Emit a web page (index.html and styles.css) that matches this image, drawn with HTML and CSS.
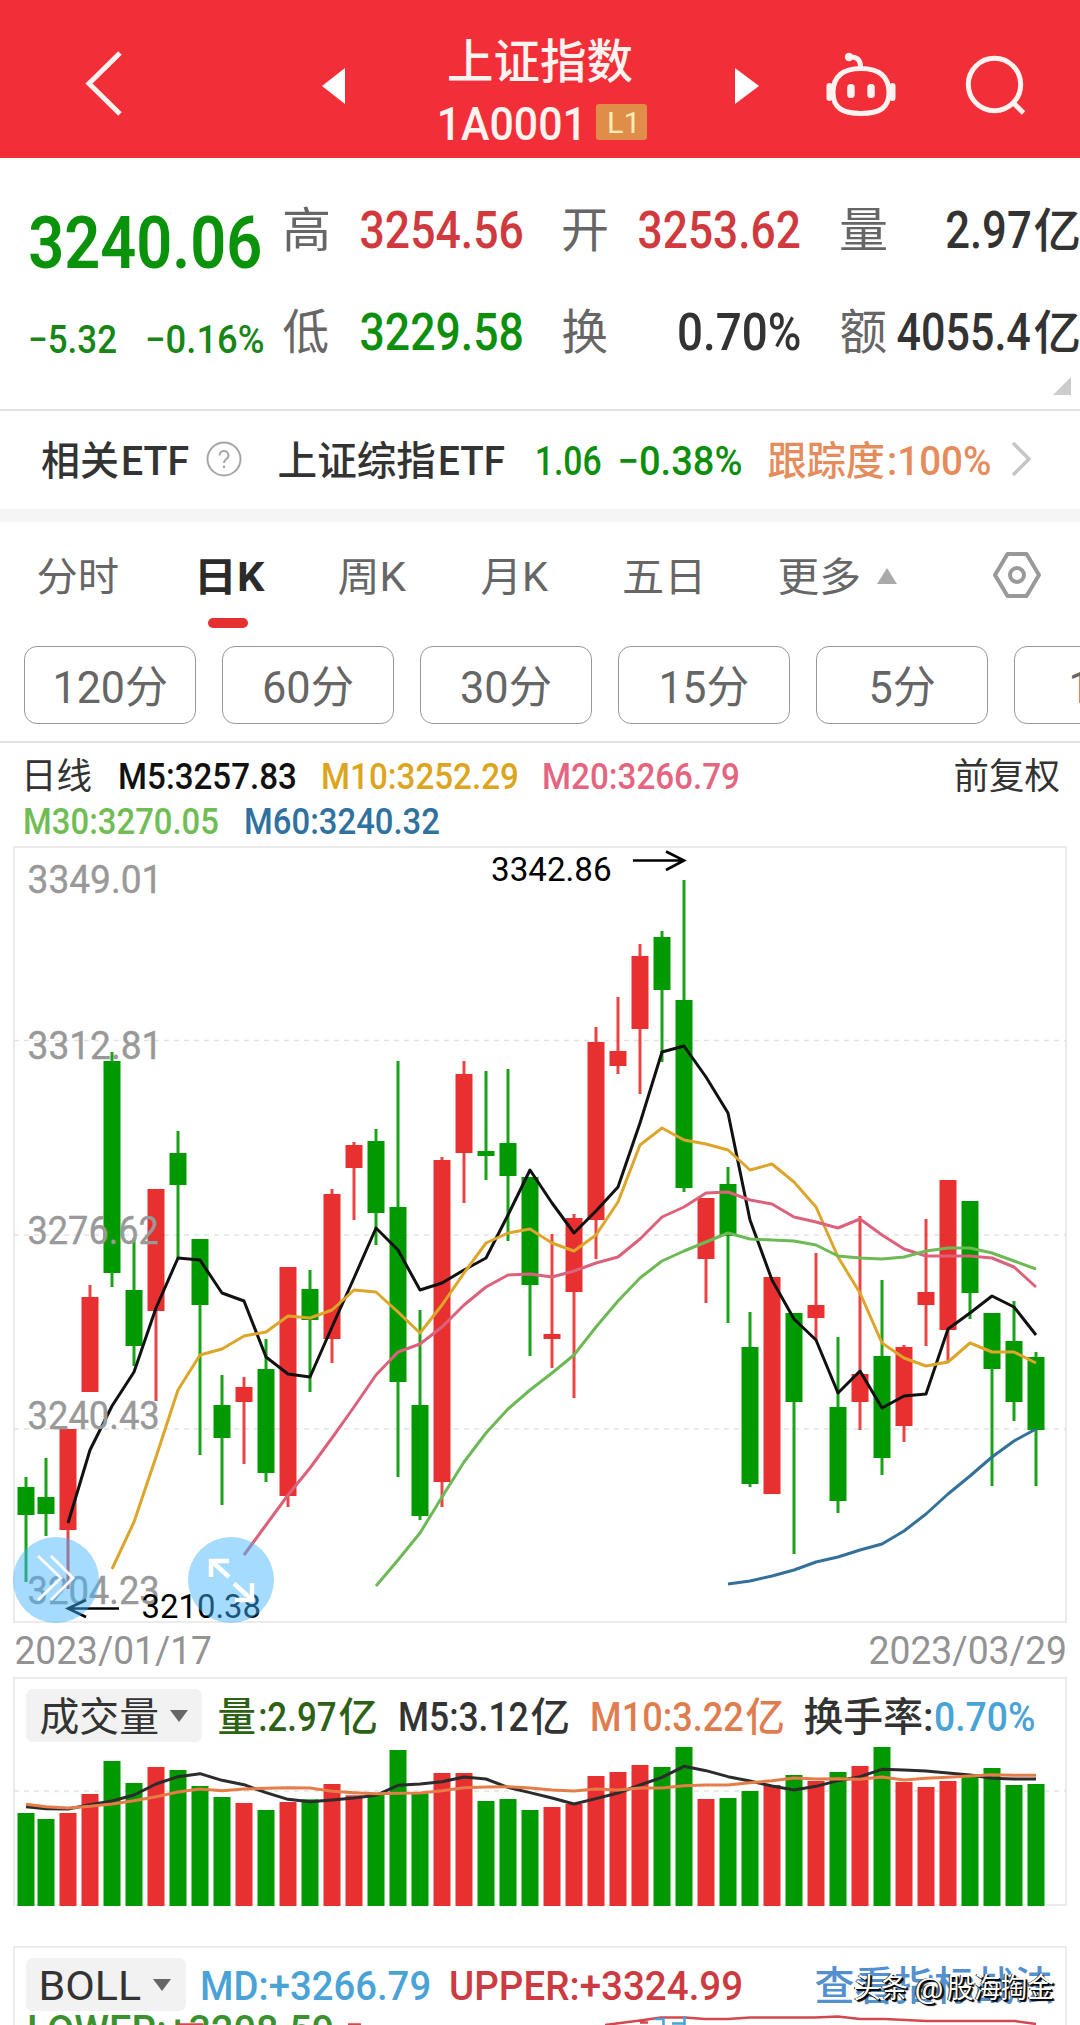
FILE: index.html
```html
<!DOCTYPE html>
<html lang="zh-CN">
<head>
<meta charset="utf-8">
<title>上证指数 1A0001</title>
<link rel="stylesheet" href="styles.css">
</head>
<body>
<div class="app">
  <header class="topbar">
    <svg class="ic back" viewBox="80 50 50 72"><path d="M120 53 89 83.500 120 114"/></svg>
    <svg class="ic prev" viewBox="318 50 30 72"><path d="M345 68v36L322 86z"/></svg>
    <div class="heading">
      <div class="title"><span class="fit" data-w="184">上证指数</span></div>
      <div class="code"><span class="fit" data-w="141">1A0001</span><b class="level"><span class="fit" data-w="27">L1</span></b></div>
    </div>
    <svg class="ic next" viewBox="732 50 30 72"><path d="M735 68v36l24-18z"/></svg>
    <svg class="ic robot" viewBox="822 50 78 72">
      <path class="line" d="M861 68.500c-18 0-28 8-28 24 0 15 9 21 28 21s28-6 28-21c0-16-10-24-28-24zM849 57c7-.5 11.500 2 11.500 10"/>
      <circle cx="849" cy="57" r="4.200"/>
      <rect x="826.500" y="83" width="6" height="18" rx="3"/><rect x="889.500" y="83" width="6" height="18" rx="3"/>
      <rect x="847.200" y="84" width="7.500" height="14" rx="3.500"/><rect x="867.300" y="84" width="7.500" height="14" rx="3.500"/>
    </svg>
    <svg class="ic search" viewBox="960 50 70 72"><circle cx="994.500" cy="84.500" r="26.200"/><path d="M1013 102.500 1023.500 113"/></svg>
  </header>

  <section class="quote">
    <div class="last">
      <div class="price"><span class="fit" data-w="231">3240.06</span></div>
      <div class="change"><span class="fit" data-w="87">−5.32</span><span class="fit" data-w="117">−0.16%</span></div>
    </div>
    <div class="stats">
      <span class="label"><span class="fit" data-w="45">高</span></span><span class="val up"><span class="fit" data-w="162">3254.56</span></span>
      <span class="label"><span class="fit" data-w="45">开</span></span><span class="val up"><span class="fit" data-w="162">3253.62</span></span>
      <span class="label"><span class="fit" data-w="46">量</span></span><span class="val edge"><span class="fit" data-w="84">2.97</span><span class="fit unit" data-w="45">亿</span></span>
      <span class="label"><span class="fit" data-w="45">低</span></span><span class="val down"><span class="fit" data-w="162">3229.58</span></span>
      <span class="label"><span class="fit" data-w="45">换</span></span><span class="val"><span class="fit" data-w="122">0.70%</span></span>
      <span class="label"><span class="fit" data-w="46">额</span></span><span class="val edge"><span class="fit" data-w="133">4055.4</span><span class="fit unit" data-w="45">亿</span></span>
    </div>
    <i class="corner"></i>
  </section>

  <section class="etf">
    <span class="fit" data-w="77">相关</span><span class="fit" data-w="67">ETF</span>
    <svg class="help" viewBox="0 0 36 36"><circle cx="18" cy="18" r="16.500"/><path d="M13.500 14.500c0-6 9-6 9 0 0 3.500-4.500 3.500-4.500 7.500M18 24.500v2.500"/></svg>
    <span class="fit" data-w="157">上证综指</span><span class="fit" data-w="66">ETF</span>
    <span class="fit down" data-w="65">1.06</span><span class="fit down" data-w="122">−0.38%</span>
    <span class="fit track" data-w="116">跟踪度</span><span class="fit track" data-w="102">:100%</span>
    <svg class="more" viewBox="0 0 22 38"><path d="M3 3 19 19 3 35"/></svg>
  </section>

  <nav class="tabs">
    <span class="tab"><span class="fit" data-w="81">分时</span></span>
    <span class="tab active"><span class="fit" data-w="68">日K</span></span>
    <span class="tab"><span class="fit" data-w="69">周K</span></span>
    <span class="tab"><span class="fit" data-w="68">月K</span></span>
    <span class="tab"><span class="fit" data-w="77">五日</span></span>
    <span class="tab"><span class="fit" data-w="81">更多</span></span>
    <svg class="caret" viewBox="0 0 22 18"><path d="M11 1 21 17H1z"/></svg>
    <svg class="gear" viewBox="0 0 48 46"><path d="M14.500 2h19L46 23 33.500 44h-19L2 23z"/><circle cx="24" cy="23" r="7"/></svg>
  </nav>
  <div class="chips">
    <span class="chip"><span class="fit" data-w="113">120分</span></span>
    <span class="chip"><span class="fit" data-w="90">60分</span></span>
    <span class="chip"><span class="fit" data-w="90">30分</span></span>
    <span class="chip"><span class="fit" data-w="88">15分</span></span>
    <span class="chip"><span class="fit" data-w="65">5分</span></span>
    <span class="chip"><span class="fit" data-w="60">1分</span></span>
  </div>

  <div class="legend">
    <div class="row first">
      <span class="fit cn" data-w="67">日线</span><span class="fit m5" data-w="176">M5:3257.83</span><span class="fit m10" data-w="195">M10:3252.29</span><span class="fit m20" data-w="195">M20:3266.79</span><span class="fit cn" data-w="105">前复权</span>
    </div>
    <div class="row second"><span class="fit m30" data-w="194">M30:3270.05</span><span class="fit m60" data-w="194">M60:3240.32</span></div>
  </div>

  <section class="kline">
    <svg id="kline" viewBox="13 846 1054 777"></svg>
    <div class="float expand"><svg viewBox="13 1537 86 86"><path d="M38 1556 61 1578 38 1600M51 1556 73 1578 51 1600"/></svg></div>
    <div class="float zoom"><svg viewBox="188 1537 86 86"><path d="M229 1577 212 1561.500M211 1577V1561h18M234 1583.500 251 1599M252 1583v17h-17"/></svg></div>
  </section>
  <div class="dates"><span class="fit" data-w="196">2023/01/17</span><span class="fit" data-w="196">2023/03/29</span></div>

  <section class="panel volume">
    <div class="head">
      <span class="picker"><span class="fit" data-w="118">成交量</span><i></i></span>
      <span class="fit vol" data-w="37">量</span><span class="fit vol" data-w="77">:2.97</span><span class="fit vol" data-w="37">亿</span>
      <span class="fit" data-w="129">M5:3.12</span><span class="fit" data-w="37">亿</span>
      <span class="fit ma" data-w="152">M10:3.22</span><span class="fit ma" data-w="37">亿</span>
      <span class="fit" data-w="128">换手率:</span><span class="fit rate" data-w="99">0.70%</span>
    </div>
    <svg id="volume" viewBox="13 1742 1054 164"></svg>
  </section>

  <section class="panel boll">
    <div class="head">
      <span class="picker"><span class="fit" data-w="101">BOLL</span><i></i></span>
      <span class="fit rate" data-w="228">MD:+3266.79</span>
      <span class="fit upper" data-w="291">UPPER:+3324.99</span>
      <span class="fit link" data-w="237">查看指标战法</span>
    </div>
    <div class="lower"><span class="fit" data-w="304">LOWER:+3208.59</span></div>
    <svg class="bands" viewBox="13 2010 1054 15">
      <path class="red" d="M605 2025 640 2020.500 661 2017.500H685L705 2019H728L750 2017.500H815L838 2016.500 860 2019H885L926 2021H1015L1036 2024M178 2024.500H203M348 2024.500H361M640 2022.500H648"/>
      <path class="blue" d="M655 2019H663.500V2025M672 2023.500H684.500M684.500 2016V2025"/>
    </svg>
    <div class="mark"><span class="fit" data-w="53">头条</span><span class="fit" data-w="27">@</span><span class="fit" data-w="107">股海掏金</span></div>
  </section>
</div>
<script src="chart.js"></script>
</body>
</html>
```
FILE: styles.css
```css
* { box-sizing: border-box; }
body {
  margin: 0;
  background: #fff;
  color: #333;
  font-family: Roboto, "Noto Sans CJK SC", sans-serif;
}
i { font-style: normal; }
svg { display: block; flex: none; }
.app { width: 1080px; height: 2025px; overflow: hidden; }
.fit { display: block; flex: none; white-space: nowrap; }
.fit > span { display: inline-block; transform-origin: 0 50%; }
.up { color: #d0393d; }
.down { color: #0d8f0d; }

/* top bar */
.topbar { display: flex; height: 158px; background: #f22f38; color: #fff3f0; }
.ic { height: 72px; margin-top: 50px; fill: #fff3f0; }
.back { width: 50px; margin-left: 80px; fill: none; stroke: #fff3f0; stroke-width: 5; }
.prev { width: 30px; margin-left: 188px; fill: #fff; }
.next { width: 30px; margin-left: 72px; fill: #fff; }
.robot { width: 78px; margin-left: 60px; }
.robot .line { fill: none; stroke: #fff3f0; stroke-width: 5; }
.search { width: 70px; margin-left: 60px; fill: none; stroke: #fff3f0; stroke-width: 5; }
.heading { width: 240px; margin-left: 72px; padding-top: 36px; }
.title { display: flex; padding-left: 28px; font-size: 47px; line-height: 48px; font-weight: 500; }
.code { display: flex; align-items: center; gap: 17px; height: 38px; margin-top: 19px; padding-left: 18px; font-size: 47px; line-height: 38px; font-weight: 500; }
.level { display: flex; justify-content: center; width: 51px; height: 36px; border-radius: 3px; background: #e08d49; color: #ffedb8; font-size: 29px; line-height: 34px; font-weight: 400; }

/* quote */
.quote { position: relative; display: flex; height: 253px; padding-left: 29px; border-bottom: 2px solid #e2e2e2; }
.last { width: 254px; padding-top: 46px; color: #0a930a; }
.price { font-size: 73px; line-height: 74px; font-weight: 600; }
.change { display: flex; gap: 30px; margin-top: 40px; color: #178617; font-size: 39px; line-height: 40px; font-weight: 500; }
.stats { display: grid; grid-template-columns: 45px 234px 45px 233px 46px 193px; grid-auto-rows: 60px; row-gap: 42px; padding-top: 41px; line-height: 60px; }
.label { color: #666; font-size: 48px; }
.val { display: flex; justify-content: flex-end; margin-right: 40px; font-size: 51px; font-weight: 500; }
.edge { gap: 4px; margin-right: 0; }
.unit { font-size: 47px; }
.corner { position: absolute; right: 9px; bottom: 14px; border-left: 18px solid transparent; border-bottom: 18px solid #ccc; }

/* related ETF */
.etf { display: grid; grid-template-columns: 81px 84px 72px 161px 97px 83px 149px 120px 123px 22px; align-items: center; height: 98px; padding-left: 41px; font-size: 40px; line-height: 50px; font-weight: 500; }
.help { width: 36px; height: 36px; margin-top: -3px; fill: none; stroke: #a5a5a5; stroke-width: 2; }
.track { color: #e68c5c; }
.more { width: 22px; height: 38px; margin-top: -3px; margin-left: -1px; fill: none; stroke: #c6c6c6; stroke-width: 3.500; }

/* period tabs */
.tabs { display: grid; grid-template-columns: 160px 141px 143px 142px 155px 98px 117px 48px; align-items: center; height: 121px; padding-left: 37px; border-top: 13px solid #f5f5f5; color: #666; font-size: 40px; line-height: 108px; }
.active { position: relative; color: #2b2b2b; font-weight: 700; }
.active::after { content: ""; position: absolute; left: 11px; bottom: 2px; width: 40px; height: 10px; border-radius: 5px; background: #e53030; }
.caret { width: 22px; height: 18px; fill: #aaa; }
.gear { width: 48px; height: 46px; margin-top: -2px; fill: none; stroke: #999; stroke-width: 4; stroke-linejoin: round; }
.chips { display: flex; gap: 26px; height: 113px; padding: 16px 0 0 24px; overflow: hidden; border-bottom: 2px solid #e2e2e2; }
.chip { display: flex; flex: none; justify-content: center; width: 172px; height: 78px; border: 1.500px solid #999; border-radius: 13px; color: #666; font-size: 44px; line-height: 79px; }

/* moving average legend */
.legend { height: 103px; padding: 9px 0 0 24px; font-size: 37px; font-weight: 500; }
.row { display: grid; line-height: 46px; }
.first { grid-template-columns: 95px 203px 221px 411px 105px; }
.second { grid-template-columns: 221px 194px; line-height: 44px; }
.cn { color: #333; font-size: 36px; font-weight: 400; }
.m5 { color: #111; }
.m10 { color: #dda51e; }
.m20 { color: #e4657f; }
.m30 { color: #70bd55; }
.m60 { color: #2f719f; }

/* candles */
.kline { position: relative; width: 1054px; height: 777px; margin-left: 13px; border: 2px solid #ebebeb; }
.kline > svg { width: 1054px; height: 777px; margin: -2px; }
.float { position: absolute; bottom: -2px; width: 86px; height: 86px; border-radius: 50%; background: rgba(64, 179, 255, .47); }
.expand { left: -2px; }
.zoom { left: 173px; }
.float svg { fill: none; stroke: #fff; stroke-width: 2.800; }
.zoom svg { stroke-width: 4.500; }
.grid { stroke: #e2e2e2; stroke-width: 1.500; stroke-dasharray: 5 5; }
.axis { fill: #999; font-size: 39px; stroke: #999; stroke-width: .4; }
.peak { fill: #000; font-size: 34px; }
.plot { fill: none; stroke-width: 3; stroke-linejoin: round; }
.dates { display: flex; justify-content: space-between; height: 54px; padding: 0 15px; color: #939393; font-size: 39px; line-height: 53px; }

/* indicator panels */
.panel { position: relative; width: 1054px; margin-left: 13px; border: 2px solid #ebebeb; border-bottom: 0; }
.head { display: grid; align-items: center; height: 53px; margin: 10px 0 0 11px; font-size: 40px; line-height: 53px; }
.picker { display: flex; align-items: center; gap: 12px; height: 53px; padding-left: 14px; border-radius: 7px; background: #f2f2f2; }
.picker i { border: 9px solid transparent; border-top: 12px solid #666; border-bottom: 0; }
.volume { height: 229px; }
.volume .head { grid-template-columns: 192px 41px 80px 60px 132px 60px 155px 58px 131px 99px; }
.volume .head > .fit { font-weight: 500; }
.volume .picker { width: 176px; }
.volume > svg { width: 1054px; height: 164px; margin-left: -2px; }
.vol { color: #2d6216; }
.ma { color: #df7d4e; }
.rate { color: #4aa3d6; }
.boll { height: 80px; margin-top: 40px; }
.boll .head { grid-template-columns: 175px 249px 365px 237px; font-size: 41px; }
.boll .head > .fit { font-weight: 500; }
.boll .picker { width: 160px; }
.upper { color: #cd3b42; }
.link { color: #5390d0; font-size: 40px; }
.lower { padding-left: 13px; color: #3c912f; font-size: 41px; line-height: 34px; font-weight: 500; }
.bands { position: absolute; left: -2px; top: 62px; width: 1054px; height: 15px; fill: none; stroke-width: 2.500; }
.red { stroke: #d2484e; }
.blue { stroke: #4aa3d6; }
.mark { position: absolute; right: 11px; top: 21px; display: flex; gap: 5px; color: #fff; font-size: 28px; line-height: 36px; text-shadow: 2px 2px 1px #000, 1px 1px 0 #000, -1px 0 0 #333; }
.mark .fit:nth-child(2) { margin-left: 3px; }
```
FILE: chart.js
```js
const ctx = document.createElement('canvas').getContext('2d');
const measure = el => {
  const s = getComputedStyle(el);
  ctx.font = `${s.fontWeight} ${s.fontSize} ${s.fontFamily}`;
  const m = ctx.measureText(el.textContent);
  const left = m.actualBoundingBoxLeft / 2;
  return { left, width: left + m.actualBoundingBoxRight };
};

// Condense each label to its column width, measured on the ink of the glyphs
document.querySelectorAll('.fit').forEach(el => {
  const w = Number(el.dataset.w);
  const m = measure(el);
  const inner = document.createElement('span');
  inner.textContent = el.textContent;
  el.textContent = '';
  el.append(inner);
  el.style.width = w + 'px';
  inner.style.transform = `translateY(2px) scaleX(${w / m.width}) translateX(${m.left}px)`;
});

const NS = 'http://www.w3.org/2000/svg';
const add = (svg, tag, attrs, text) => {
  const el = document.createElementNS(NS, tag);
  for (const k in attrs) el.setAttribute(k, attrs[k]);
  if (text) el.textContent = text;
  svg.append(el);
  return el;
};
const label = (svg, cls, x, y, w, text) => {
  const el = add(svg, 'text', { class: cls }, text);
  const m = measure(el);
  const k = w / m.width;
  el.setAttribute('transform', `translate(${x + m.left * k} ${y}) scale(${k} 1)`);
};
const RED = '#e83030', GREEN = '#009900';
const cx = i => i ? 24 + 22 * i : 26;
const plot = (svg, start, ys, color) =>
  add(svg, 'polyline', { class: 'plot', stroke: color, points: ys.map((y, i) => `${cx(i + start)},${y}`).join(' ') });

// open/close body top and bottom, then high and low
const candles = [
  'g1487 1515 1477 1582', 'g1497 1514 1458 1536', 'r1429 1530 1429 1589', 'r1297 1392 1285 1392', 'g1061 1273 1052 1287',
  'g1290 1346 1238 1366', 'r1189 1311 1189 1401', 'g1153 1185 1131 1258', 'g1239 1305 1239 1455', 'g1405 1438 1375 1505',
  'r1387 1402 1377 1464', 'g1369 1473 1339 1482', 'r1267 1496 1267 1507', 'g1289 1320 1270 1392', 'r1194 1339 1189 1363',
  'r1145 1168 1142 1220', 'g1141 1213 1129 1245', 'g1207 1382 1061 1477', 'g1405 1516 1310 1520', 'r1160 1482 1157 1507',
  'r1074 1153 1061 1203', 'g1151 1156 1071 1180', 'g1143 1176 1069 1241', 'g1177 1285 1177 1356', 'r1334 1339 1234 1368',
  'r1218 1292 1214 1398', 'r1042 1220 1027 1259', 'r1051 1066 997 1074', 'r956 1029 944 1094', 'g937 990 931 1062',
  'g1000 1188 880 1192', 'r1198 1259 1198 1303', 'g1184 1236 1167 1323', 'g1347 1484 1312 1487', 'r1277 1494 1277 1494',
  'g1313 1402 1313 1554', 'r1305 1318 1253 1340', 'g1407 1501 1337 1513', 'r1374 1402 1216 1430', 'g1356 1458 1280 1475',
  'r1347 1426 1345 1442', 'r1292 1305 1219 1346', 'r1180 1330 1180 1363', 'g1201 1293 1201 1319', 'g1313 1369 1313 1486',
  'g1341 1402 1301 1421', 'g1357 1430 1352 1486'
].map(s => [s[0] === 'r' ? RED : GREEN, ...s.slice(1).split(' ').map(Number)]);

const k = document.getElementById('kline');
[1040.5, 1235, 1429].forEach(y => add(k, 'line', { class: 'grid', x1: 14, x2: 1066, y1: y, y2: y }));
candles.forEach(([color, top, bottom, high, low], i) => {
  add(k, 'rect', { x: cx(i) - 1.5, y: high, width: 3, height: low - high, fill: color, opacity: .9 });
  add(k, 'rect', { x: cx(i) - 8.5, y: top, width: 17, height: bottom - top, fill: color });
});
plot(k, 2, [1523,1450,1406,1372,1308,1258,1260,1293,1301,1357,1374,1377,1327,1278,1228,1250,1290,1283,1270,1258,1215,1170,1203,1233,1211,1187,1123,1052,1046,1077,1113,1220,1280,1319,1340,1393,1371,1408,1396,1394,1329,1313,1296,1307,1335], '#111');
plot(k, 4, [1569,1522,1457,1390,1355,1349,1336,1332,1316,1318,1310,1290,1292,1312,1333,1305,1273,1243,1233,1229,1243,1251,1235,1202,1145,1128,1140,1144,1150,1170,1164,1182,1207,1257,1293,1343,1358,1366,1362,1343,1352,1352,1363], '#dda52a');
plot(k, 10, [1555,1525,1495,1468,1438,1407,1375,1352,1344,1327,1305,1287,1275,1274,1277,1271,1263,1257,1239,1217,1207,1193,1192,1200,1204,1217,1222,1228,1219,1235,1249,1256,1256,1256,1258,1267,1287], '#dc627c');
plot(k, 16, [1586,1560,1533,1497,1462,1433,1409,1390,1373,1355,1327,1301,1278,1261,1251,1242,1233,1239,1240,1241,1245,1256,1258,1259,1257,1251,1248,1248,1253,1261,1269], '#6cb955');
plot(k, 32, [1584,1581,1576,1570,1562,1557,1550,1544,1531,1514,1494,1476,1457,1441,1429], '#33709a');
[['3349.01', 893], ['3312.81', 1059], ['3276.62', 1244], ['3240.43', 1429], ['3204.23', 1604]].forEach(([t, y]) => label(k, 'axis', 28, y, t.endsWith('1') ? 127 : 130, t));
label(k, 'peak', 491.5, 881, 119, '3342.86');
label(k, 'peak', 142, 1618, 118, '3210.38');
add(k, 'path', { d: 'M633 860.500H683M666 851.500 684 860.500 666 870M119 1608.500H69M86 1600 68 1608.500 86 1617', fill: 'none', stroke: '#000', 'stroke-width': 2.6 });

// traded volume, in chart units below the panel's top edge
const v = document.getElementById('volume');
const vy = n => 1670 + n / 3;
const volumes = [429,447,429,372,273,339,291,300,348,381,399,420,396,388,342,376,372,240,370,309,309,393,387,420,411,402,318,306,285,291,231,387,384,363,345,315,333,306,288,231,336,351,333,318,294,345,342];
add(v, 'line', { class: 'grid', x1: 14, x2: 1066, y1: 1791, y2: 1791 });
add(v, 'path', { d: 'M1046 1905H1067', stroke: '#ebebeb', 'stroke-width': 2 });
volumes.forEach((n, i) => add(v, 'rect', { x: cx(i) - 8.5, y: vy(n), width: 17, height: 1906 - vy(n), fill: candles[i][0] }));
plot(v, 0, [410,416,417,404,393,375,342,320,311,331,344,368,388,395,390,384,376,346,342,335,321,327,352,368,384,402,386,369,345,322,289,302,320,333,348,360,349,332,320,298,300,303,309,315,325,327,327].map(vy), '#2c2c2c');
plot(v, 0, [403,410,414,409,402,392,380,366,357,362,357,355,353,354,364,368,371,370,369,362,353,351,350,354,360,363,357,360,354,354,347,345,345,338,332,324,327,326,328,321,330,325,322,318,314,316,316].map(vy), '#e67c48');
```
